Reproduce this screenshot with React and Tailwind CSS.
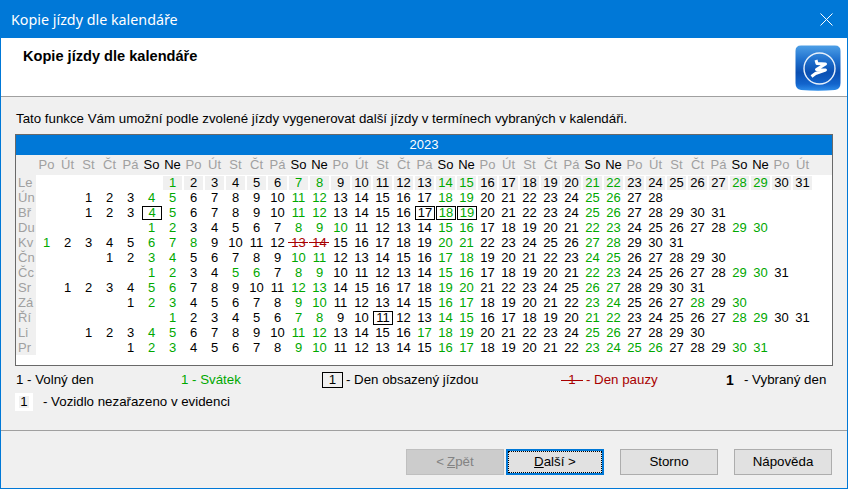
import React from "react";

const weekdays = ["Po", "Út", "St", "Čt", "Pá", "So", "Ne"];

const months = [
  { label: "Le", start: 6, days: 31, holidays: [1] },
  { label: "Ún", start: 2, days: 28, holidays: [] },
  { label: "Bř", start: 2, days: 31, holidays: [] },
  { label: "Du", start: 5, days: 30, holidays: [10] },
  { label: "Kv", start: 0, days: 31, holidays: [1, 8] },
  { label: "Čn", start: 3, days: 30, holidays: [] },
  { label: "Čc", start: 5, days: 31, holidays: [5, 6] },
  { label: "Sr", start: 1, days: 31, holidays: [] },
  { label: "Zá", start: 4, days: 30, holidays: [28] },
  { label: "Ří", start: 6, days: 31, holidays: [28] },
  { label: "Li", start: 2, days: 30, holidays: [17] },
  { label: "Pr", start: 4, days: 31, holidays: [24, 25, 26] },
];

const boxed = { "2-4": true, "2-17": true, "2-18": true, "2-19": true, "9-11": true };
const paused = { "4-13": true, "4-14": true };

function DayCell({ month, col }) {
  const m = months[month];
  const day = col - m.start + 1;
  if (day < 1 || day > m.days) {
    return <div className="h-[15px] w-[21px]" />;
  }
  const key = `${month}-${day}`;
  const green = col % 7 === 5 || col % 7 === 6 || m.holidays.includes(day);
  let color = green ? "text-[#00a800]" : "text-black";
  if (paused[key]) color = "text-[#a80000]";
  return (
    <div className="relative h-[15px] w-[21px]">
      <div
        className={`absolute left-px top-px flex h-[14px] items-center justify-center ${color} ${
          boxed[key] ? "w-[20px] border border-black" : "w-[19px]"
        } ${month === 0 ? "bg-[#f0f0f0]" : ""}`}
      >
        {day}
      </div>
      {paused[key] && <div className="absolute left-0 top-[7px] h-px w-[20px] bg-[#a80000]" />}
    </div>
  );
}

function LogoIcon() {
  return (
    <svg width="46" height="46" viewBox="0 0 46 46" className="mr-[6px] mt-[7px] shrink-0">
      <defs>
        <linearGradient id="tile" x1="0" y1="0" x2="0" y2="1">
          <stop offset="0" stopColor="#4d9fe6" />
          <stop offset="0.3" stopColor="#2273cf" />
          <stop offset="0.6" stopColor="#0a4fb2" />
          <stop offset="0.85" stopColor="#1264cc" />
          <stop offset="1" stopColor="#2f8eea" />
        </linearGradient>
      </defs>
      <path d="M6 0.5 H40 Q45.5 0.5 45.5 6 V38 Q45.5 44 40 45 Q23 46.5 6 45 Q0.5 44 0.5 38 V6 Q0.5 0.5 6 0.5 Z" fill="url(#tile)" />
      <circle cx="24.5" cy="23.5" r="15.5" fill="none" stroke="#e8f1fb" strokeWidth="1.4" />
      <path
        d="M21 15 L22 18.5 L30.5 19 L21.5 24.5 L30.5 25 L20.5 28.5 L16.5 31.5"
        fill="none"
        stroke="#ffffff"
        strokeWidth="3"
        strokeLinejoin="round"
      />
    </svg>
  );
}

function Btn({ children, variant }) {
  if (variant === "focused") {
    return (
      <button className="h-[26px] w-[98px] border-2 border-[#0078d7] bg-[#e1e1e1] text-black">
        <span className="flex h-full w-full items-center justify-center border border-dotted border-black">{children}</span>
      </button>
    );
  }
  if (variant === "disabled") {
    return (
      <button className="flex h-[26px] w-[98px] items-center justify-center border border-[#bfbfbf] bg-[#cccccc] text-[#838383]">
        {children}
      </button>
    );
  }
  return (
    <button className="flex h-[26px] w-[98px] items-center justify-center border border-[#adadad] bg-[#e1e1e1] text-black">
      {children}
    </button>
  );
}

export default function App() {
  const cols = Array.from({ length: 37 }, (_, i) => i);
  return (
    <div className="flex h-[489px] w-[848px] flex-col border border-[#0078d7] bg-[#f0f0f0] font-['Liberation_Sans',Arial,sans-serif] text-[13.3px] text-black">
      <div className="flex h-[37px] shrink-0 items-center justify-between bg-[#0078d7] pl-[10px] pr-[14px] font-['Noto_Sans',sans-serif] text-[14.3px] text-white">
        <span>Kopie jízdy dle kalendáře</span>
        <svg width="13" height="13" viewBox="0 0 13 13">
          <path d="M0.5 0.5 L12.5 12.5 M12.5 0.5 L0.5 12.5" stroke="#ffffff" strokeWidth="1" />
        </svg>
      </div>

      <div className="flex h-[59px] shrink-0 items-start justify-between border-b border-[#a0a0a0] bg-white">
        <h1 className="pl-[22px] pt-[10px] text-[14.6px] font-bold leading-[17px]">Kopie jízdy dle kalendáře</h1>
        <LogoIcon />
      </div>

      <p className="pl-[15px] pt-[14px] leading-[15px]">
        Tato funkce Vám umožní podle zvolené jízdy vygenerovat další jízdy v termínech vybraných v kalendáři.
      </p>

      <div className="ml-[14px] mt-[8px] h-[232px] w-[818px] shrink-0 border border-[#696969] bg-white text-[13px]">
        <div className="flex h-[20px] items-center justify-center bg-[#0078d7] text-white">2023</div>
        <div className="flex h-[20px] items-center bg-[#f0f0f0] pl-[20px]">
          {cols.map((c) => (
            <div
              key={c}
              className={`w-[21px] text-center ${c % 7 >= 5 ? "text-black" : "text-[#a0a0a0]"}`}
            >
              {weekdays[c % 7]}
            </div>
          ))}
        </div>
        {months.map((m, month) => (
          <div key={m.label} className="flex h-[15px]">
            <div className="h-[15px] w-[20px] bg-[#f0f0f0] pl-[2px] leading-[16px] text-[#a0a0a0]">{m.label}</div>
            {cols.map((c) => (
              <DayCell key={c} month={month} col={c} />
            ))}
          </div>
        ))}
      </div>

      <div className="mt-[6px] flex h-[16px] items-center pl-[15px]">
        <span className="w-[165px]">1 - Volný den</span>
        <span className="w-[141px] text-[#00a800]">1 - Svátek</span>
        <span className="flex w-[239px] items-center">
          <span className="mr-[3px] flex h-[16px] w-[21px] items-center justify-center border border-black">1</span>
          - Den obsazený jízdou
        </span>
        <span className="flex w-[165px] items-center text-[#a80000]">
          <span className="relative mr-[3px] w-[22px] text-center">
            1<span className="absolute left-0 top-[10px] h-px w-[22px] bg-[#a80000]" />
          </span>
          - Den pauzy
        </span>
        <span className="flex items-center">
          <b className="w-[18px] text-[14px]">1</b>- Vybraný den
        </span>
      </div>

      <div className="mt-[5px] flex h-[18px] items-center pl-[14px]">
        <span className="flex h-[18px] w-[18px] items-center justify-center bg-white">
          <span className="flex h-[12px] w-[10px] items-center justify-center bg-[#f0f0f0]">1</span>
        </span>
        <span className="ml-[10px]">- Vozidlo nezařazeno v evidenci</span>
      </div>

      <div className="mt-[19px] flex flex-1 items-start justify-end border-t border-[#a0a0a0] pr-[15px] pt-[18px]">
        <Btn variant="disabled">
          &lt; <u className="ml-[3px]">Z</u>pět
        </Btn>
        <div className="ml-[2px]">
          <Btn variant="focused">
            <u>D</u>alší &gt;
          </Btn>
        </div>
        <div className="ml-[16px]">
          <Btn>Storno</Btn>
        </div>
        <div className="ml-[16px]">
          <Btn>Nápověda</Btn>
        </div>
      </div>
    </div>
  );
}
